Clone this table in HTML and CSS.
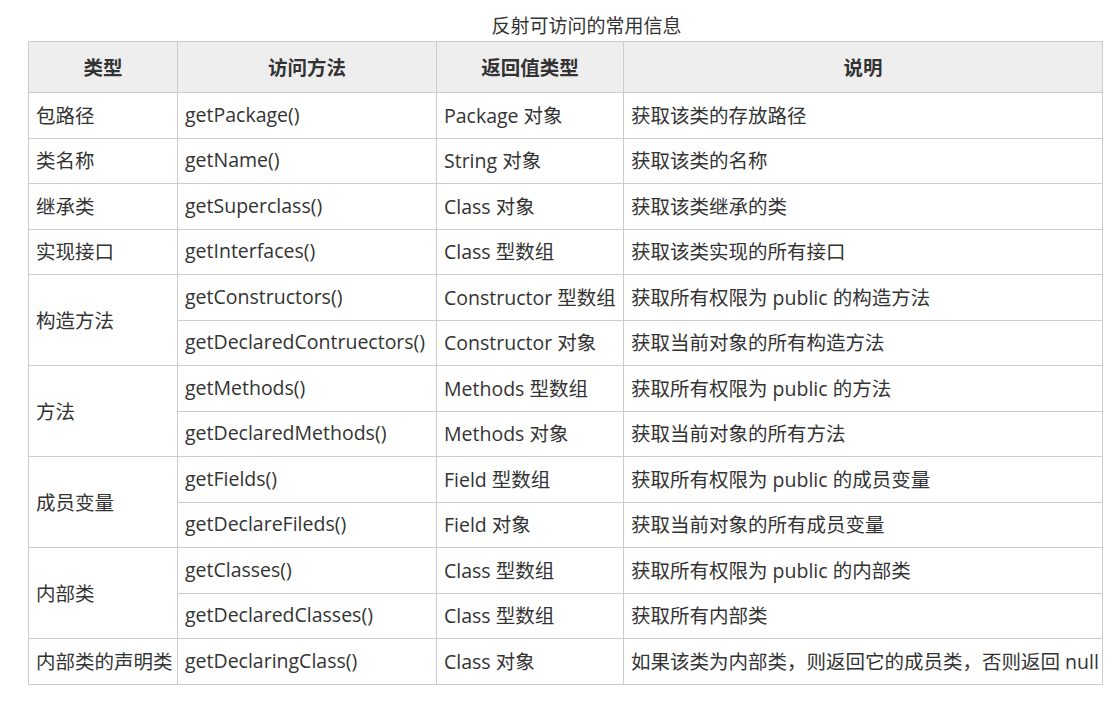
FILE: index.html
```html
<!DOCTYPE html>
<html lang="zh-CN">
<head>
<meta charset="utf-8">
<title>反射可访问的常用信息</title>
<link rel="stylesheet" href="styles.css">
</head>
<body>
<div class="wrap">
  <div class="caption"><span class="cap-text">反射可访问的常用信息</span></div>
  <table class="info">
    <colgroup>
      <col class="c1"><col class="c2"><col class="c3"><col class="c4">
    </colgroup>
    <thead>
      <tr><th>类型</th><th>访问方法</th><th>返回值类型</th><th>说明</th></tr>
    </thead>
    <tbody>
      <tr><td>包路径</td><td>getPackage()</td><td>Package 对象</td><td>获取该类的存放路径</td></tr>
      <tr><td>类名称</td><td>getName()</td><td>String 对象</td><td>获取该类的名称</td></tr>
      <tr><td>继承类</td><td>getSuperclass()</td><td>Class 对象</td><td>获取该类继承的类</td></tr>
      <tr><td>实现接口</td><td>getInterfaces()</td><td>Class 型数组</td><td>获取该类实现的所有接口</td></tr>
      <tr><td rowspan="2">构造方法</td><td>getConstructors()</td><td>Constructor 型数组</td><td>获取所有权限为 public 的构造方法</td></tr>
      <tr><td>getDeclaredContruectors()</td><td>Constructor 对象</td><td>获取当前对象的所有构造方法</td></tr>
      <tr><td rowspan="2">方法</td><td>getMethods()</td><td>Methods 型数组</td><td>获取所有权限为 public 的方法</td></tr>
      <tr><td>getDeclaredMethods()</td><td>Methods 对象</td><td>获取当前对象的所有方法</td></tr>
      <tr><td rowspan="2">成员变量</td><td>getFields()</td><td>Field 型数组</td><td>获取所有权限为 public 的成员变量</td></tr>
      <tr><td>getDeclareFileds()</td><td>Field 对象</td><td>获取当前对象的所有成员变量</td></tr>
      <tr><td rowspan="2">内部类</td><td>getClasses()</td><td>Class 型数组</td><td>获取所有权限为 public 的内部类</td></tr>
      <tr><td>getDeclaredClasses()</td><td>Class 型数组</td><td>获取所有内部类</td></tr>
      <tr><td>内部类的声明类</td><td>getDeclaringClass()</td><td>Class 对象</td><td>如果该类为内部类，则返回它的成员类，否则返回 null</td></tr>
    </tbody>
  </table>
</div>
</body>
</html>
```

FILE: styles.css
```css
html, body {
  margin: 0;
  padding: 0;
  background: #fff;
}
body {
  font-family: "Open Sans", "Noto Sans CJK SC", sans-serif;
  color: #333;
}
.wrap {
  padding: 8px 0 0 28px;
  width: 1074px;
}
.caption {
  display: flex;
  justify-content: center;
  align-items: center;
  height: 33px;
  padding-left: 43px;
  font-family: "Noto Sans CJK SC", sans-serif;
  font-size: 19px;
  color: #333;
}
.info {
  border-collapse: collapse;
  width: 1074px;
  table-layout: fixed;
  font-size: 19.5px;
}
.c1 { width: 149px; }
.c2 { width: 259px; }
.c3 { width: 187px; }
.c4 { width: 479px; }
.info th, .info td {
  border: 1px solid #ccc;
  padding: 0 7px 2px;
  text-align: left;
  white-space: nowrap;
  overflow: hidden;
}
.info th {
  background: #eee;
  height: 48px;
  text-align: center;
  font-family: "Noto Sans CJK SC", sans-serif;
  font-weight: 700;
  font-size: 19.5px;
  color: #333;
}
.info td {
  height: 42.5px;
}
```
